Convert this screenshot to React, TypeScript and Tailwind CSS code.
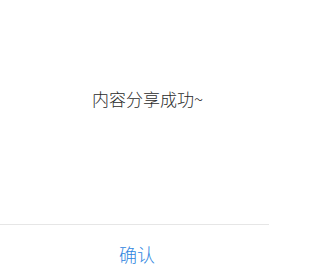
import React from "react";

export default function App() {
  return (
    <div
      className="w-[269px] h-[270px] bg-white overflow-hidden flex flex-col"
      style={{ fontFamily: '"Noto Sans CJK SC", "Noto Sans", sans-serif' }}
    >
      <div className="h-[224px] shrink-0 pt-[89px] pl-[92px]">
        <p className="text-[17px] leading-[20px] font-light text-[#2b2b2b]">内容分享成功~</p>
      </div>
      <div className="border-t border-[#e6e6e6] flex-1 pt-[17px] pl-[119px]">
        <span className="text-[18px] leading-[24px] font-light text-[#2f86e0]">确认</span>
      </div>
    </div>
  );
}
